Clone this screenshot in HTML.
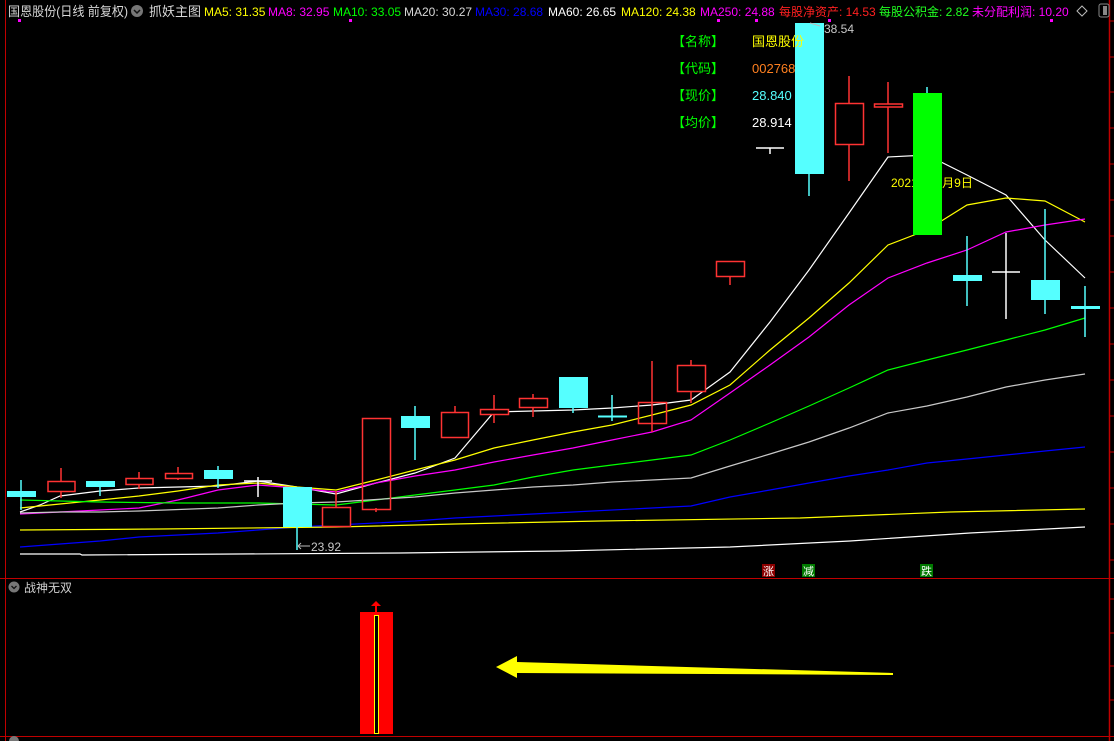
<!DOCTYPE html>
<html><head><meta charset="utf-8"><style>
html,body{margin:0;padding:0;background:#000;width:1114px;height:741px;overflow:hidden}
svg{display:block}
text{font-family:"Liberation Sans","Noto Sans CJK SC",sans-serif}
</style></head><body>
<svg width="1114" height="741" viewBox="0 0 1114 741" xmlns="http://www.w3.org/2000/svg">
<rect width="1114" height="741" fill="#000"/>
<line x1="5.5" y1="0" x2="5.5" y2="741" stroke="#c00000"/>
<line x1="1109.5" y1="0" x2="1109.5" y2="741" stroke="#c00000" stroke-width="1.5"/>
<line x1="0" y1="578.5" x2="1114" y2="578.5" stroke="#c00000"/>
<line x1="0" y1="736.5" x2="1114" y2="736.5" stroke="#c00000"/>
<g stroke="#c00000"><line x1="1110" y1="21" x2="1114" y2="21"/><line x1="1110" y1="57" x2="1114" y2="57"/><line x1="1110" y1="92" x2="1114" y2="92"/><line x1="1110" y1="128" x2="1114" y2="128"/><line x1="1110" y1="164" x2="1114" y2="164"/><line x1="1110" y1="200" x2="1114" y2="200"/><line x1="1110" y1="236" x2="1114" y2="236"/><line x1="1110" y1="272" x2="1114" y2="272"/><line x1="1110" y1="308" x2="1114" y2="308"/><line x1="1110" y1="344" x2="1114" y2="344"/><line x1="1110" y1="380" x2="1114" y2="380"/><line x1="1110" y1="416" x2="1114" y2="416"/><line x1="1110" y1="452" x2="1114" y2="452"/><line x1="1110" y1="488" x2="1114" y2="488"/><line x1="1110" y1="524" x2="1114" y2="524"/><line x1="1110" y1="560" x2="1114" y2="560"/><line x1="1110" y1="599" x2="1114" y2="599"/><line x1="1110" y1="633" x2="1114" y2="633"/><line x1="1110" y1="666" x2="1114" y2="666"/><line x1="1110" y1="700" x2="1114" y2="700"/></g>
<g fill="#ff00ff"><rect x="18" y="19" width="3" height="3"/><rect x="349" y="19" width="3" height="3"/><rect x="717" y="19" width="3" height="3"/><rect x="755" y="19" width="3" height="3"/><rect x="828" y="19" width="3" height="3"/><rect x="1050" y="19" width="3" height="3"/></g>

<text x="8" y="16" font-size="13" fill="#d8d8d8" textLength="120" lengthAdjust="spacingAndGlyphs">国恩股份(日线 前复权)</text>
<circle cx="137" cy="11" r="6" fill="#777"/><path d="M134 10 l3 3 l3 -3" stroke="#111" stroke-width="1.5" fill="none"/>
<text x="149" y="16" font-size="13" fill="#d8d8d8">抓妖主图</text>
<text x="204" y="16" font-size="12" fill="#ffff00">MA5: 31.35</text>
<text x="268" y="16" font-size="12" fill="#ff00ff">MA8: 32.95</text>
<text x="333" y="16" font-size="12" fill="#00ff00">MA10: 33.05</text>
<text x="404" y="16" font-size="12" fill="#d8d8d8">MA20: 30.27</text>
<text x="475" y="16" font-size="12" fill="#0000ff">MA30: 28.68</text>
<text x="548" y="16" font-size="12" fill="#ffffff">MA60: 26.65</text>
<text x="621" y="16" font-size="12" fill="#ffff00">MA120: 24.38</text>
<text x="700" y="16" font-size="12" fill="#ff00ff">MA250: 24.88</text>
<text x="779" y="16" font-size="12" fill="#ff2020">每股净资产: 14.53</text>
<text x="879" y="16" font-size="12" fill="#20ff20">每股公积金: 2.82</text>
<text x="972" y="16" font-size="12" fill="#ff00ff">未分配利润: 10.20</text>
<path d="M1082 6 l5 5 l-5 5 l-5 -5z" stroke="#bbb" fill="none"/>
<rect x="1099" y="4" width="10" height="13" rx="2" stroke="#888" fill="none"/><rect x="1103" y="6" width="4" height="9" fill="#888"/>

<text x="891" y="187" font-size="12" fill="#ffff00">2021年11月9日</text>

<g fill="none" stroke-width="1.2">
<polyline stroke="#ffffff" points="20,512 40,505 60,496 100,491 139,488 218,486 258,481 297,487 336,494 376,483 415,473 455,458 494,412 533,411 573,410 612,408 652,405 691,400 730,372 770,322 809,270 849,213 888,157 927,155 967,175 1006,195 1045,240 1085,278"/>
<polyline stroke="#ffff00" points="20,508 60,504 100,500 139,496 178,491 218,485 258,483 297,487 336,490 376,480 415,470 455,460 494,448 533,440 573,432 612,425 652,415 691,405 730,385 770,350 809,318 849,283 888,245 927,230 967,205 1006,198 1045,201 1085,222"/>
<polyline stroke="#ff00ff" points="20,514 60,512 100,510 139,508 178,500 218,490 258,485 297,488 336,492 376,483 415,476 455,470 494,462 533,455 573,448 612,440 652,432 691,420 730,393 770,365 809,337 849,305 888,278 927,263 967,250 1006,232 1045,225 1085,219"/>
<polyline stroke="#00ff00" points="20,500 60,501 100,502 178,503 258,503 297,504 336,505 376,500 415,495 455,490 494,485 533,477 573,470 612,465 652,460 691,455 730,440 770,423 809,406 849,388 888,370 927,360 967,350 1006,340 1045,330 1085,318"/>
<polyline stroke="#c8c8c8" points="20,513 60,512 100,512 139,511 218,508 258,505 297,503 336,502 415,497 455,493 494,490 533,487 573,485 612,482 652,480 691,478 730,466 770,454 809,442 849,428 888,413 927,406 967,397 1006,387 1045,380 1085,374"/>
<polyline stroke="#0000ff" points="20,547 60,544 100,541 139,537 218,533 258,530 297,527 336,525 415,521 455,518 533,514 573,512 652,508 691,506 730,497 770,490 809,483 849,476 888,470 927,463 967,459 1006,455 1045,451 1085,447"/>
<polyline stroke="#ffff00" points="20,530 160,529 336,527 455,524 600,521 800,518 950,512 1085,509"/>
<polyline stroke="#ffffff" points="20,554 80,554 82,555 400,553 560,551 730,547 850,541 970,533 1085,527"/>
</g>

<g stroke-width="1.5">
<line x1="21" y1="480" x2="21" y2="510" stroke="#55ffff"/><rect x="7" y="491" width="29" height="6" fill="#55ffff"/>
<line x1="61" y1="468" x2="61" y2="498" stroke="#ff3333"/><rect x="48" y="481.5" width="27" height="10" fill="#000" stroke="#ff3333"/>
<line x1="100" y1="481" x2="100" y2="496" stroke="#55ffff"/><rect x="86" y="481" width="29" height="6" fill="#55ffff"/>
<line x1="139" y1="472" x2="139" y2="489" stroke="#ff3333"/><rect x="126" y="478.5" width="27" height="6" fill="#000" stroke="#ff3333"/>
<line x1="178" y1="467" x2="178" y2="480" stroke="#ff3333"/><rect x="165.5" y="473.5" width="27" height="5" fill="#000" stroke="#ff3333"/>
<line x1="218" y1="466" x2="218" y2="488" stroke="#55ffff"/><rect x="204" y="470" width="29" height="9" fill="#55ffff"/>
<line x1="258" y1="477" x2="258" y2="497" stroke="#fff"/><line x1="244" y1="481" x2="272" y2="481" stroke="#fff"/>
<line x1="297" y1="487" x2="297" y2="550" stroke="#55ffff"/><rect x="283" y="487" width="29" height="40" fill="#55ffff"/>
<line x1="336" y1="491" x2="336" y2="508" stroke="#ff3333"/><rect x="322.5" y="507.5" width="28" height="19" fill="#000" stroke="#ff3333"/>
<line x1="376" y1="508" x2="376" y2="512" stroke="#ff3333"/><rect x="362.5" y="418.5" width="28" height="91" fill="none" stroke="#ff3333"/>
<line x1="415" y1="406" x2="415" y2="460" stroke="#55ffff"/><rect x="401" y="416" width="29" height="12" fill="#55ffff"/>
<line x1="455" y1="406" x2="455" y2="413" stroke="#ff3333"/><rect x="441.5" y="412.5" width="27" height="25" fill="#000" stroke="#ff3333"/>
<line x1="494" y1="395" x2="494" y2="423" stroke="#ff3333"/><rect x="480.5" y="409.5" width="28" height="5" fill="#000" stroke="#ff3333"/>
<line x1="533" y1="394" x2="533" y2="417" stroke="#ff3333"/><rect x="519.5" y="398.5" width="28" height="9" fill="#000" stroke="#ff3333"/>
<line x1="573" y1="377" x2="573" y2="413" stroke="#55ffff"/><rect x="559" y="377" width="29" height="31" fill="#55ffff"/>
<line x1="612" y1="395" x2="612" y2="421" stroke="#55ffff"/><rect x="598" y="415.5" width="29" height="2" fill="#55ffff"/>
<line x1="652" y1="361" x2="652" y2="432" stroke="#ff3333"/><rect x="638.5" y="402.5" width="28" height="21" fill="none" stroke="#ff3333"/>
<line x1="691" y1="360" x2="691" y2="403" stroke="#ff3333"/><rect x="677.5" y="365.5" width="28" height="26" fill="#000" stroke="#ff3333"/>
<line x1="730" y1="276" x2="730" y2="285" stroke="#ff3333"/><rect x="716.5" y="261.5" width="28" height="15" fill="#000" stroke="#ff3333"/>
<line x1="770" y1="148" x2="770" y2="154" stroke="#fff"/><line x1="756" y1="148" x2="784" y2="148" stroke="#fff"/>
<line x1="809" y1="174" x2="809" y2="196" stroke="#55ffff"/><rect x="795" y="23" width="29" height="151" fill="#55ffff"/>
<line x1="849" y1="76" x2="849" y2="181" stroke="#ff3333"/><rect x="835.5" y="103.5" width="28" height="41" fill="#000" stroke="#ff3333"/>
<line x1="888" y1="82" x2="888" y2="153" stroke="#ff3333"/><rect x="874.5" y="104" width="28" height="3" fill="#000" stroke="#ff3333"/>
<line x1="927" y1="87" x2="927" y2="93" stroke="#55ffff"/><rect x="913" y="93" width="29" height="142" fill="#00ff00"/>
<line x1="967" y1="236" x2="967" y2="306" stroke="#55ffff"/><rect x="953" y="275" width="29" height="6" fill="#55ffff"/>
<line x1="1006" y1="233" x2="1006" y2="319" stroke="#fff"/><line x1="992" y1="272" x2="1020" y2="272" stroke="#fff"/>
<line x1="1045" y1="209" x2="1045" y2="314" stroke="#55ffff"/><rect x="1031" y="280" width="29" height="20" fill="#55ffff"/>
<line x1="1085" y1="286" x2="1085" y2="337" stroke="#55ffff"/><rect x="1071" y="306" width="29" height="3" fill="#55ffff"/>
</g>

<path d="M298 546 h12 M298 546 l3 -3 M298 546 l3 3" stroke="#bbb" fill="none"/>
<text x="311" y="551" font-size="12" fill="#c8c8c8">23.92</text>
<path d="M810 23 l10 3" stroke="#bbb" fill="none"/>
<text x="824" y="33" font-size="12" fill="#c8c8c8">38.54</text>

<g font-size="13" fill="#00ff00">
<text x="672" y="46">【名称】</text><text x="672" y="73">【代码】</text><text x="672" y="100">【现价】</text><text x="672" y="127">【均价】</text>
</g>
<text x="752" y="46" font-size="13" fill="#ffff00">国恩股份</text>
<text x="752" y="73" font-size="13" fill="#ff8020">002768</text>
<text x="752" y="100" font-size="13" fill="#55ffff">28.840</text>
<text x="752" y="127" font-size="13" fill="#ffffff">28.914</text>

<rect x="762" y="564" width="13" height="13" fill="#8b0000"/><text x="763" y="575" font-size="11" fill="#fff">涨</text>
<rect x="802" y="564" width="13" height="13" fill="#007a00"/><text x="803" y="575" font-size="11" fill="#fff">减</text>
<rect x="920" y="564" width="13" height="13" fill="#007a00"/><text x="921" y="575" font-size="11" fill="#fff">跌</text>

<circle cx="14" cy="587" r="5.5" fill="#777"/><path d="M11.5 586 l2.5 2.5 l2.5 -2.5" stroke="#111" stroke-width="1.3" fill="none"/>
<text x="24" y="592" font-size="12" fill="#d0d0d0">战神无双</text>
<rect x="360" y="612" width="33" height="122" fill="#ff0000"/>
<rect x="374.5" y="615.5" width="4" height="118" fill="#000" stroke="#ffff00" stroke-width="1"/>
<line x1="376" y1="604" x2="376" y2="612" stroke="#ff0000" stroke-width="2"/>
<path d="M371 606 l5 -5 l5 5z" fill="#ff0000"/>
<path d="M496 667 L517 656 L517 662 L893 673 L893 675 L517 673 L517 678 Z" fill="#ffff00"/>
<circle cx="14" cy="741" r="5" fill="#777"/>
</svg>
</body></html>
